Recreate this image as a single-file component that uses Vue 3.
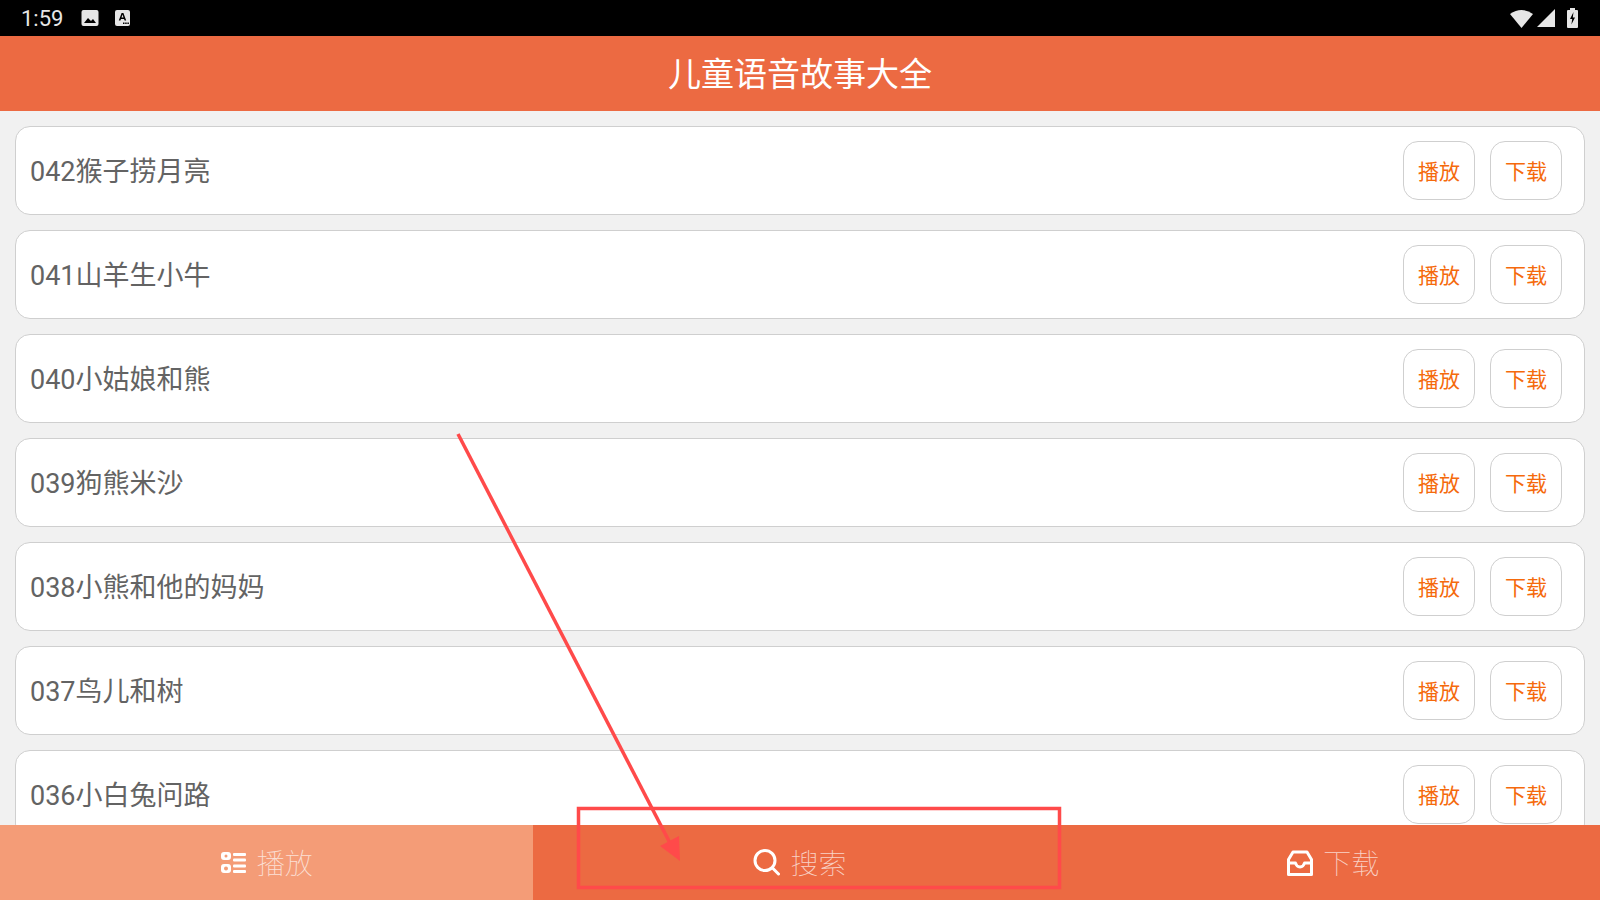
<template>
  <div class="page">
    <div class="status">
      <span class="time">1:59</span>
      <svg class="note" width="18" height="18" viewBox="0 0 18 18">
        <rect x="0.5" y="1" width="17" height="16" rx="2" fill="#e6e6e6" />
        <path d="M3 14l4-5 3 3 2-2 3 4z" fill="#000" />
      </svg>
      <svg class="note" width="15" height="16" viewBox="0 0 15 16">
        <rect x="0" y="0" width="15" height="16" rx="2" fill="#e6e6e6" />
        <path d="M3.800 10.500L6.600 3h1.800l2.800 7.500H9.600L9 8.900H6l-.6 1.600zM6.500 7.600h2l-1-3z" fill="#000" />
        <path d="M8 12.500h1.500V14H8zM10.200 12.500h1.500V14h-1.500zM12.400 12.500h1.500V14h-1.500z" fill="#000" />
      </svg>
      <span class="spacer"></span>
      <svg width="23" height="19" viewBox="0 0 23 19"><path d="M0 5Q11.500-3 23 5L11.500 19z" fill="#e6e6e6" /></svg>
      <svg class="signal" width="18" height="18" viewBox="0 0 18 18"><path d="M18 0v18H0z" fill="#e6e6e6" /></svg>
      <svg class="battery" width="11" height="20" viewBox="0 0 11 20">
        <path d="M3 0h5v2h2a1 1 0 0 1 1 1v16a1 1 0 0 1-1 1H1a1 1 0 0 1-1-1V3a1 1 0 0 1 1-1h2z" fill="#e6e6e6" />
        <path d="M6.500 4L3 11h2.200l-.8 5.500L8 9.500H5.800z" fill="#000" />
      </svg>
    </div>

    <div class="header">儿童语音故事大全</div>

    <div class="list">
      <div v-for="item in stories" :key="item" class="row">
        <span class="name">{{ item }}</span>
        <button class="btn">播放</button>
        <button class="btn">下载</button>
      </div>
    </div>

    <div class="tabs">
      <div class="tab active">
        <svg width="26" height="22" viewBox="0 0 26 22" fill="#fff">
          <path fill-rule="evenodd" d="M3 0h4a3 3 0 0 1 3 3v2a3 3 0 0 1-3 3H3a3 3 0 0 1-3-3V3a3 3 0 0 1 3-3zm2 2.500a1.500 1.500 0 1 0 0 3 1.500 1.500 0 0 0 0-3z" />
          <path fill-rule="evenodd" d="M3 12h4a3 3 0 0 1 3 3v3a3 3 0 0 1-3 3H3a3 3 0 0 1-3-3v-3a3 3 0 0 1 3-3zm2 2.500a2 2 0 1 0 0 4 2 2 0 0 0 0-4z" />
          <rect x="12" y="1" width="13" height="3" rx="1" />
          <rect x="12" y="6.500" width="13" height="3" rx="1" />
          <rect x="12" y="12.500" width="13" height="3" rx="1" />
          <rect x="12" y="18" width="13" height="3" rx="1" />
        </svg>
        <span>播放</span>
      </div>
      <div class="tab">
        <svg width="27" height="27" viewBox="0 0 27 27" fill="none" stroke="#fff" stroke-width="3" stroke-linecap="round">
          <circle cx="12" cy="11.500" r="10" />
          <path d="M19.500 19l6 6" />
        </svg>
        <span>搜索</span>
      </div>
      <div class="tab">
        <svg width="26" height="26" viewBox="0 0 26 26" fill="none" stroke="#fff" stroke-width="3" stroke-linejoin="round">
          <path d="M6 2h14l4.500 7.500V24.500H1.500V9.500z" />
          <path d="M1.500 13h7q1 4 4.500 4t4.500-4h7" />
        </svg>
        <span>下载</span>
      </div>
    </div>

    <svg class="mark" width="1600" height="900" viewBox="0 0 1600 900" fill="none">
      <rect x="578.500" y="808.500" width="481" height="79" stroke="#ff4a4a" stroke-width="3.500" />
      <path d="M458 434L670 843" stroke="#ff4a4a" stroke-width="3.500" />
      <path d="M660 846L679 836L680 861z" fill="#ff4a4a" />
    </svg>
  </div>
</template>

<script setup>
const stories = [
  "042猴子捞月亮",
  "041山羊生小牛",
  "040小姑娘和熊",
  "039狗熊米沙",
  "038小熊和他的妈妈",
  "037鸟儿和树",
  "036小白兔问路",
];
</script>

<style>
html,
body {
  margin: 0;
  overflow: hidden;
}
</style>

<style scoped>
.page {
  position: relative;
  display: flex;
  flex-direction: column;
  width: 1600px;
  height: 900px;
  overflow: hidden;
  background: #f1f1f1;
  font-family: Roboto, "Noto Sans CJK SC", sans-serif;
}

.status {
  display: flex;
  align-items: center;
  flex: none;
  height: 36px;
  padding: 0 22px 0 21px;
  box-sizing: border-box;
  background: #000;
  color: #e6e6e6;
}
.time {
  margin-right: 18px;
  font-size: 22px;
}
.note {
  margin-right: 16px;
}
.spacer {
  flex: 1;
}
.signal {
  margin-left: 4px;
}
.battery {
  margin-left: 12px;
}

.header {
  flex: none;
  height: 75px;
  background: #ec6a42;
  color: #fff;
  font-size: 33px;
  line-height: 77px;
  text-align: center;
}

.list {
  flex: 1;
  min-height: 0;
  overflow: hidden;
  padding: 15px 15px 0;
}
.row {
  display: flex;
  align-items: center;
  gap: 15px;
  height: 89px;
  margin-bottom: 15px;
  padding: 0 22px 0 14px;
  box-sizing: border-box;
  border: 1px solid #cfcfcf;
  border-radius: 15px;
  background: #fff;
}
.name {
  flex: 1;
  margin-bottom: 2px;
  color: #636363;
  font-size: 27px;
}
.btn {
  width: 72px;
  height: 59px;
  padding: 0 0 2px;
  border: 1px solid #cfcfcf;
  border-radius: 15px;
  background: #fff;
  color: #f56a0c;
  font-family: inherit;
  font-size: 21px;
}

.tabs {
  display: flex;
  flex: none;
  height: 75px;
  background: #ec6a42;
}
.tab {
  display: flex;
  flex: 1;
  align-items: center;
  justify-content: center;
  gap: 10px;
  color: #fff;
  font-size: 28px;
  font-weight: 100;
}
.tab span {
  margin-bottom: 2px;
  opacity: 0.7;
}
.tab.active {
  background: #f49c77;
}

.mark {
  position: absolute;
  top: 0;
  left: 0;
  pointer-events: none;
}
</style>
